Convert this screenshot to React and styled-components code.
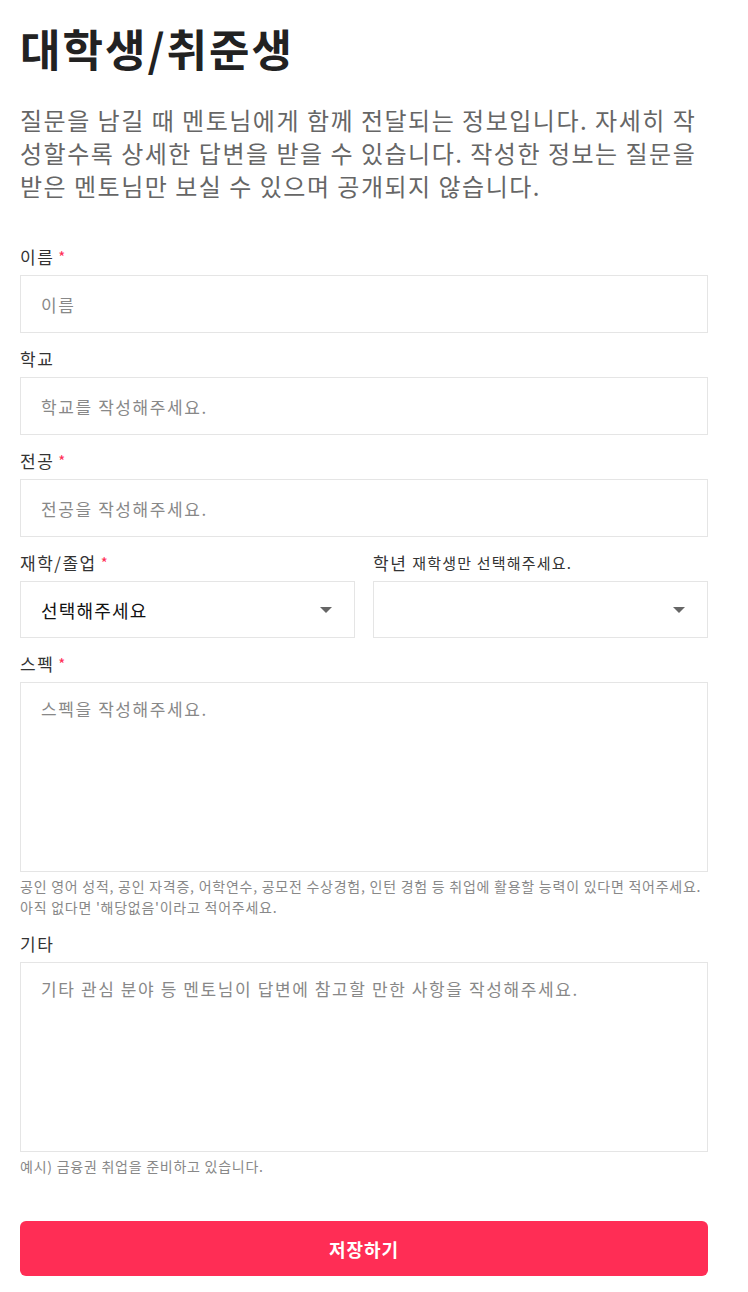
import React from "react";
import styled, { createGlobalStyle } from "styled-components";

const Global = createGlobalStyle`
  * { box-sizing: border-box; }
  body {
    margin: 0;
    background: #fff;
    font-family: "Noto Sans CJK KR", "Noto Sans", sans-serif;
    color: #222;
  }
`;

const Page = styled.div`
  width: 688px;
  margin-left: 20px;
  padding: 22px 0 17px;
  display: flex;
  flex-direction: column;
`;

const Title = styled.h1`
  margin: 0;
  font-size: 44px;
  line-height: 52px;
  font-weight: 700;
  color: #222;
  letter-spacing: 2px;
`;

const Desc = styled.p`
  margin: 29px 0 0;
  font-size: 24px;
  line-height: 33px;
  color: #666;
  letter-spacing: 1.5px;
`;

const Form = styled.form`
  margin-top: 43px;
  display: flex;
  flex-direction: column;
  gap: 14px;
`;

const Field = styled.div`
  display: flex;
  flex-direction: column;
  flex: 1;
  min-width: 0;
`;

const Row = styled.div`
  display: flex;
  gap: 18px;
`;

const Label = styled.label`
  font-size: 17px;
  line-height: 24px;
  color: #333;
  letter-spacing: 1.5px;
  margin-bottom: 6px;
  display: flex;
  align-items: center;
`;

const Star = styled.span`
  color: #ff2d55;
  margin-left: 4px;
  font-size: 15px;
`;

const Note = styled.span`
  font-size: 15px;
  color: #333;
  letter-spacing: 1.2px;
  margin-left: 5px;
`;

const Input = styled.input`
  height: 58px;
  width: 100%;
  border: 1px solid #e5e5e5;
  border-radius: 0;
  padding: 0 20px;
  font-family: inherit;
  font-size: 17px;
  letter-spacing: 1.6px;
  color: #222;
  outline: none;
  &::placeholder { color: #888; }
`;

const TextArea = styled.textarea`
  height: 190px;
  width: 100%;
  border: 1px solid #e5e5e5;
  padding: 14px 20px;
  font-family: inherit;
  font-size: 17px;
  letter-spacing: 1.6px;
  line-height: 24px;
  color: #222;
  resize: none;
  outline: none;
  &::placeholder { color: #888; }
`;

const SelectBox = styled.div`
  height: 57px;
  border: 1px solid #e5e5e5;
  padding: 0 20px;
  display: flex;
  align-items: center;
  justify-content: space-between;
  font-size: 18px;
  letter-spacing: 1.2px;
  color: #111;
`;

const Arrow = styled.span`
  width: 0;
  height: 0;
  border-left: 6px solid transparent;
  border-right: 6px solid transparent;
  border-top: 6px solid #666;
  margin-right: 2px;
`;

const Help = styled.p`
  margin: 4px 0 0;
  font-size: 14px;
  line-height: 21px;
  color: #888;
  letter-spacing: 0.75px;
`;

const Button = styled.button`
  margin-top: 30px;
  height: 55px;
  width: 100%;
  border: none;
  border-radius: 6px;
  background: #ff2d55;
  color: #fff;
  font-family: inherit;
  font-size: 18px;
  letter-spacing: 1px;
  font-weight: 700;
`;

export default function App() {
  return (
    <Page>
      <Global />
      <Title>대학생/취준생</Title>
      <Desc>
        질문을 남길 때 멘토님에게 함께 전달되는 정보입니다. 자세히 작성할수록
        상세한 답변을 받을 수 있습니다. 작성한 정보는 질문을 받은 멘토님만 보실
        수 있으며 공개되지 않습니다.
      </Desc>
      <Form onSubmit={(e) => e.preventDefault()}>
        <Field>
          <Label>이름<Star>*</Star></Label>
          <Input placeholder="이름" />
        </Field>
        <Field>
          <Label>학교</Label>
          <Input placeholder="학교를 작성해주세요." />
        </Field>
        <Field>
          <Label>전공<Star>*</Star></Label>
          <Input placeholder="전공을 작성해주세요." />
        </Field>
        <Row>
          <Field>
            <Label>재학/졸업<Star>*</Star></Label>
            <SelectBox>선택해주세요<Arrow /></SelectBox>
          </Field>
          <Field>
            <Label>학년<Note>재학생만 선택해주세요.</Note></Label>
            <SelectBox><span /><Arrow /></SelectBox>
          </Field>
        </Row>
        <Field>
          <Label>스펙<Star>*</Star></Label>
          <TextArea placeholder="스펙을 작성해주세요." />
          <Help>
            공인 영어 성적, 공인 자격증, 어학연수, 공모전 수상경험, 인턴 경험 등 취업에 활용할 능력이 있다면 적어주세요.
            <br />
            아직 없다면 '해당없음'이라고 적어주세요.
          </Help>
        </Field>
        <Field>
          <Label>기타</Label>
          <TextArea placeholder="기타 관심 분야 등 멘토님이 답변에 참고할 만한 사항을 작성해주세요." />
          <Help>예시) 금융권 취업을 준비하고 있습니다.</Help>
        </Field>
        <Button type="submit">저장하기</Button>
      </Form>
    </Page>
  );
}
